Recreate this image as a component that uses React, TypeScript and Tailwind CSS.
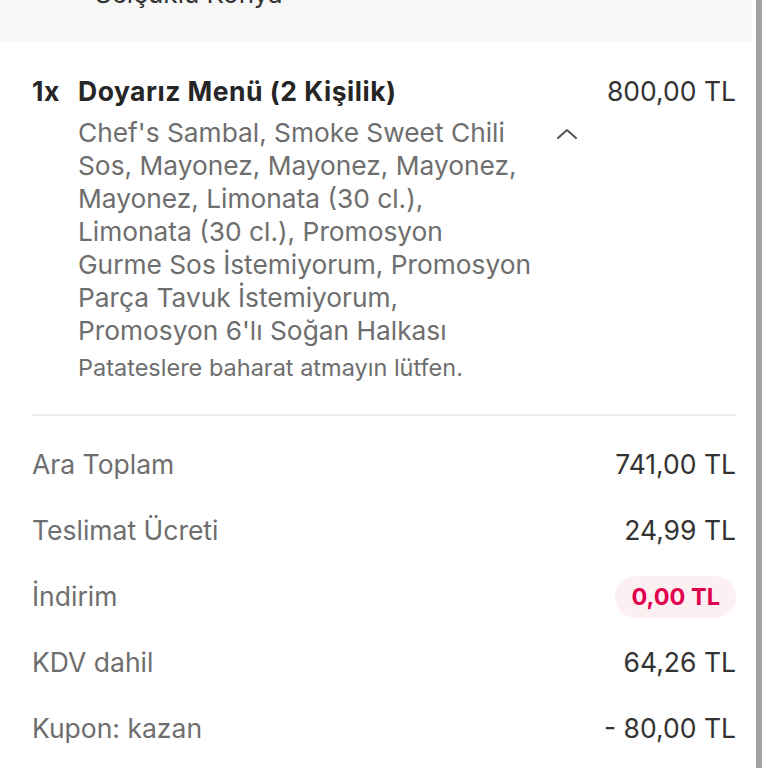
import React from "react";

const rows: { label: string; value: string; badge?: boolean }[] = [
  { label: "Ara Toplam", value: "741,00 TL" },
  { label: "Teslimat Ücreti", value: "24,99 TL" },
  { label: "İndirim", value: "0,00 TL", badge: true },
  { label: "KDV dahil", value: "64,26 TL" },
  { label: "Kupon: kazan", value: "- 80,00 TL" },
];

const descLines = [
  "Chef's Sambal, Smoke Sweet Chili",
  "Sos, Mayonez, Mayonez, Mayonez,",
  "Mayonez, Limonata (30 cl.),",
  "Limonata (30 cl.), Promosyon",
  "Gurme Sos İstemiyorum, Promosyon",
  "Parça Tavuk İstemiyorum,",
  "Promosyon 6'lı Soğan Halkası",
];

export default function App() {
  return (
    <div
      className="relative w-[768px] h-[768px] overflow-hidden bg-white"
      style={{ fontFamily: "Inter, 'Noto Sans', sans-serif" }}
    >
      <div className="h-[42px] mr-[16px] bg-[#f7f7f7] overflow-hidden">
        <div className="-mt-[22px] pl-[95px] text-[26px] leading-[32px] text-[#333]">
          Selçuklu Konya
        </div>
      </div>

      <div className="px-[32px]">
        <div className="pt-[34px]">
          <div className="flex items-center justify-between h-[32px]">
            <div className="flex items-center text-[26.5px] font-bold tracking-[0.5px] text-[#262626]">
              <span className="w-[46px]">1x</span>
              <span>Doyarız Menü (2 Kişilik)</span>
            </div>
            <span className="text-[26.5px] text-[#333]">800,00 TL</span>
          </div>
          <div className="flex pl-[46px] mt-[8px]">
            <div className="w-[470px] text-[26.3px] leading-[33px] text-[#6e6e6e] whitespace-nowrap">
              {descLines.map((l) => (
                <div key={l}>{l}</div>
              ))}
            </div>
            <div className="ml-[8px] pt-[11px]">
              <svg width="22" height="14" viewBox="0 0 22 14">
                <polyline
                  points="2,11 11,3 20,11"
                  fill="none"
                  stroke="#555"
                  strokeWidth="2"
                  strokeLinecap="round"
                  strokeLinejoin="round"
                />
              </svg>
            </div>
          </div>
          <div className="pl-[46px] mt-[8px] text-[23.5px] leading-[26px] text-[#6e6e6e]">
            Patateslere baharat atmayın lütfen.
          </div>
        </div>
        <div className="mt-[33px] h-[2px] bg-[#ececec]" />
        <div className="pt-[16px]">
          {rows.map((r) => (
            <div key={r.label} className="flex items-center justify-between h-[66px]">
              <span className="text-[26.5px] text-[#6e6e6e]">{r.label}</span>
              {r.badge ? (
                <span className="h-[42px] px-[16px] rounded-full bg-[#fdf0f3] flex items-center text-[23.5px] font-bold text-[#e0004d]">
                  {r.value}
                </span>
              ) : (
                <span className="text-[26.5px] text-[#333]">{r.value}</span>
              )}
            </div>
          ))}
        </div>
      </div>

      <div className="absolute top-0 bottom-0 left-[756px] w-[6px] bg-[#a3a3a3]" />
    </div>
  );
}
